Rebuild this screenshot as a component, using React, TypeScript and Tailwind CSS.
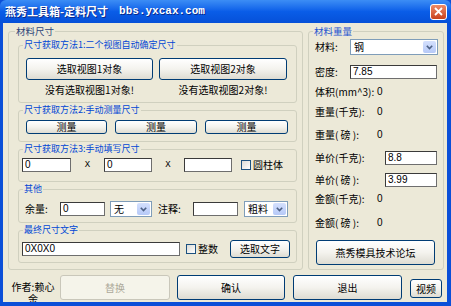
import React from "react";

function Btn({ children, className = "" }: { children?: React.ReactNode; className?: string }) {
  return (
    <div
      className={`flex items-center justify-center rounded-[3px] border border-[#003c74] bg-linear-to-b from-[#ffffff] via-[#f4f3ee] to-[#dedcd2] text-[10px] leading-none text-black ${className}`}
    >
      {children}
    </div>
  );
}

function Input({ value = "", className = "" }: { value?: string; className?: string }) {
  return (
    <div
      className={`flex items-center border border-t-[#3a3a3a] border-l-[#3a3a3a] border-r-[#6e6e6e] border-b-[#6e6e6e] bg-white pl-[2px] font-['Liberation_Sans',sans-serif] text-[10px] leading-none text-black ${className}`}
    >
      {value}
    </div>
  );
}

function Chevron() {
  return (
    <svg width="7" height="5" viewBox="0 0 7 5">
      <path d="M0.8 0.8 L3.5 3.6 L6.2 0.8" fill="none" stroke="#4d6185" strokeWidth="1.6" />
    </svg>
  );
}

function Select({ value, className = "" }: { value: string; className?: string }) {
  return (
    <div className={`flex border border-[#7f9db9] bg-white ${className}`}>
      <div className="flex flex-1 items-center pl-[3px] text-[10px] leading-none text-black">{value}</div>
      <div className="m-[1px] flex w-[13px] items-center justify-center rounded-[2px] bg-linear-to-b from-[#d4e0fd] to-[#b6c9f7]">
        <Chevron />
      </div>
    </div>
  );
}

function Check() {
  return <div className="h-[10px] w-[10px] border border-[#1c5180] bg-linear-to-br from-[#dcdcd7] to-[#ffffff]" />;
}

function Legend({
  children,
  color = "text-[#0046d5]",
  ml = "ml-[4px]",
  size = "text-[9px]",
}: {
  children: React.ReactNode;
  color?: string;
  ml?: string;
  size?: string;
}) {
  return <legend className={`${ml} px-[1px] ${size} leading-[14px] ${color}`}>{children}</legend>;
}

function Row({ label, value, mt }: { label: string; value: string; mt: string }) {
  return (
    <div className={`flex h-[14px] items-center ${mt}`}>
      <div className="w-[62px] text-[10px] leading-none">{label}</div>
      <div className="font-['Liberation_Sans',sans-serif] text-[10px] leading-none">{value}</div>
    </div>
  );
}

export default function App() {
  return (
    <div className="flex h-[306px] w-[451px] flex-col overflow-hidden bg-[#0b4fd8] font-['Noto_Sans_CJK_SC',sans-serif] text-black">
      {/* title bar */}
      <div className="flex h-[23px] shrink-0 items-center rounded-t-[6px] bg-linear-to-b from-[#3c8df5] via-[#0a5de8] to-[#0650d8] pl-[5px]">
        <span className="text-[11px] font-bold leading-none text-white [text-shadow:1px_1px_0_#0a2a8a]">燕秀工具箱-定料尺寸</span>
        <span className="ml-[11px] font-['Liberation_Mono',monospace] text-[11px] font-bold leading-none text-white [text-shadow:1px_1px_0_#0a2a8a]">
          bbs.yxcax.com
        </span>
        <div className="ml-auto mr-[4px] flex h-[16px] w-[17px] items-center justify-center rounded-[3px] border border-white bg-linear-to-b from-[#ee8a66] to-[#c8411b]">
          <svg width="9" height="9" viewBox="0 0 9 9">
            <path d="M1 1L8 8M8 1L1 8" stroke="white" strokeWidth="1.8" />
          </svg>
        </div>
      </div>

      {/* body */}
      <div className="mb-[4px] ml-[3px] mr-[4px] flex flex-1 flex-col overflow-hidden bg-[#ece9d8]">
        <div className="flex gap-[5px] pl-[5px] pt-[1px]">
          {/* left group */}
          <fieldset className="h-[246px] w-[295px] rounded-[3px] border border-[#d0d0bf]">
            <Legend color="text-[#2c4478]" ml="ml-[6px]" size="text-[9.5px]">材料尺寸</Legend>
            <div className="flex flex-col pl-[9px] pr-[5px]">
              {/* sub1 */}
              <fieldset className="w-[279px] rounded-[3px] border border-[#d0d0bf] pb-[6px]">
                <Legend>尺寸获取方法1:二个视图自动确定尺寸</Legend>
                <div className="mt-[6px] flex gap-[6px] pl-[7px]">
                  <Btn className="h-[22px] w-[127px]">选取视图1对象</Btn>
                  <Btn className="h-[22px] w-[128px]">选取视图2对象</Btn>
                </div>
                <div className="mt-[4px] flex gap-[6px] pl-[7px] text-[10px] leading-[12px]">
                  <div className="w-[127px] text-center">没有选取视图1对象!</div>
                  <div className="w-[128px] text-center">没有选取视图2对象!</div>
                </div>
              </fieldset>
              {/* sub2 */}
              <fieldset className="w-[279px] rounded-[3px] border border-[#d0d0bf] pb-[7px]">
                <Legend>尺寸获取方法2:手动测量尺寸</Legend>
                <div className="mt-[3px] flex gap-[8px] pl-[7px]">
                  <Btn className="h-[14px] w-[81px]">测量</Btn>
                  <Btn className="h-[14px] w-[82px]">测量</Btn>
                  <Btn className="h-[14px] w-[83px]">测量</Btn>
                </div>
              </fieldset>
              {/* sub3 */}
              <fieldset className="w-[279px] rounded-[3px] border border-[#d0d0bf] pb-[9px]">
                <Legend>尺寸获取方法3:手动填写尺寸</Legend>
                <div className="mt-[2px] flex h-[14px] items-center pl-[3px]">
                  <Input value="0" className="h-[14px] w-[49px]" />
                  <div className="w-[33px] text-center font-['Liberation_Mono',monospace] text-[9px] leading-none">X</div>
                  <Input value="0" className="h-[14px] w-[48px]" />
                  <div className="w-[32px] text-center font-['Liberation_Mono',monospace] text-[9px] leading-none">X</div>
                  <Input value="" className="h-[14px] w-[48px]" />
                  <div className="ml-[9px]">
                    <Check />
                  </div>
                  <div className="ml-[2px] text-[10px] leading-none">圆柱体</div>
                </div>
              </fieldset>
              {/* sub4 */}
              <fieldset className="w-[279px] rounded-[3px] border border-[#d0d0bf] pb-[5px]">
                <Legend>其他</Legend>
                <div className="mt-[5px] flex h-[16px] items-center pl-[6px]">
                  <div className="w-[35px] text-[10px] leading-none">余量:</div>
                  <Input value="0" className="h-[14px] w-[45px]" />
                  <Select value="无" className="ml-[5px] h-[16px] w-[42px]" />
                  <div className="w-[41px] pl-[6px] text-[10px] leading-none">注释:</div>
                  <Input value="" className="h-[14px] w-[45px]" />
                  <Select value="粗料" className="ml-[6px] h-[16px] w-[44px]" />
                </div>
              </fieldset>
              {/* sub5 */}
              <fieldset className="w-[279px] rounded-[3px] border border-[#d0d0bf] pb-[4px]">
                <Legend>最终尺寸文字</Legend>
                <div className="mt-[3px] flex h-[18px] items-center pl-[3px]">
                  <Input value="0X0X0" className="h-[14px] w-[158px]" />
                  <div className="ml-[6px]">
                    <Check />
                  </div>
                  <div className="ml-[2px] text-[10px] leading-none">整数</div>
                  <Btn className="ml-[12px] h-[18px] w-[60px]">选取文字</Btn>
                </div>
              </fieldset>
            </div>
          </fieldset>

          {/* right group */}
          <fieldset className="h-[246px] w-[136px] rounded-[3px] border border-[#d0d0bf]">
            <Legend color="text-[#1f55d0]" size="text-[9.5px]">材料重量</Legend>
            <div className="flex flex-col pl-[6px]">
              <div className="mt-[1px] flex h-[16px] items-center">
                <div className="w-[35px] text-[10px] leading-none">材料:</div>
                <Select value="钢" className="h-[16px] w-[88px]" />
              </div>
              <div className="mt-[10px] flex h-[14px] items-center">
                <div className="w-[35px] text-[10px] leading-none">密度:</div>
                <Input value="7.85" className="h-[14px] w-[87px]" />
              </div>
              <Row label="体积(mm^3):" value="0" mt="mt-[6px]" />
              <Row label="重量(千克):" value="0" mt="mt-[6px]" />
              <Row label="重量( 磅 ):" value="0" mt="mt-[9px]" />
              <div className="mt-[9px] flex h-[14px] items-center">
                <div className="w-[70px] text-[10px] leading-none">单价(千克):</div>
                <Input value="8.8" className="h-[14px] w-[52px]" />
              </div>
              <div className="mt-[8px] flex h-[14px] items-center">
                <div className="w-[70px] text-[10px] leading-none">单价( 磅 ):</div>
                <Input value="3.99" className="h-[14px] w-[52px]" />
              </div>
              <Row label="金额(千克):" value="0" mt="mt-[5px]" />
              <Row label="金额( 磅 ):" value="0" mt="mt-[10px]" />
              <Btn className="ml-[1px] mt-[10px] h-[25px] w-[119px]">燕秀模具技术论坛</Btn>
            </div>
          </fieldset>
        </div>

        {/* bottom row */}
        <div className="flex items-start pl-[4px] pt-[5px]">
          <div className="mt-[6px] w-[52px] text-center text-[10px] leading-[12px]">作者:赖心余</div>
          <div className="ml-[1px] flex h-[25px] w-[110px] items-center justify-center rounded-[3px] border border-[#c9c7ba] bg-[#f5f4ea] text-[10px] leading-none text-[#aca899]">
            替换
          </div>
          <Btn className="ml-[7px] h-[25px] w-[108px]">确认</Btn>
          <Btn className="ml-[8px] h-[25px] w-[109px]">退出</Btn>
          <Btn className="ml-[8px] mt-[4px] h-[19px] w-[32px]">视频</Btn>
        </div>
      </div>
    </div>
  );
}
